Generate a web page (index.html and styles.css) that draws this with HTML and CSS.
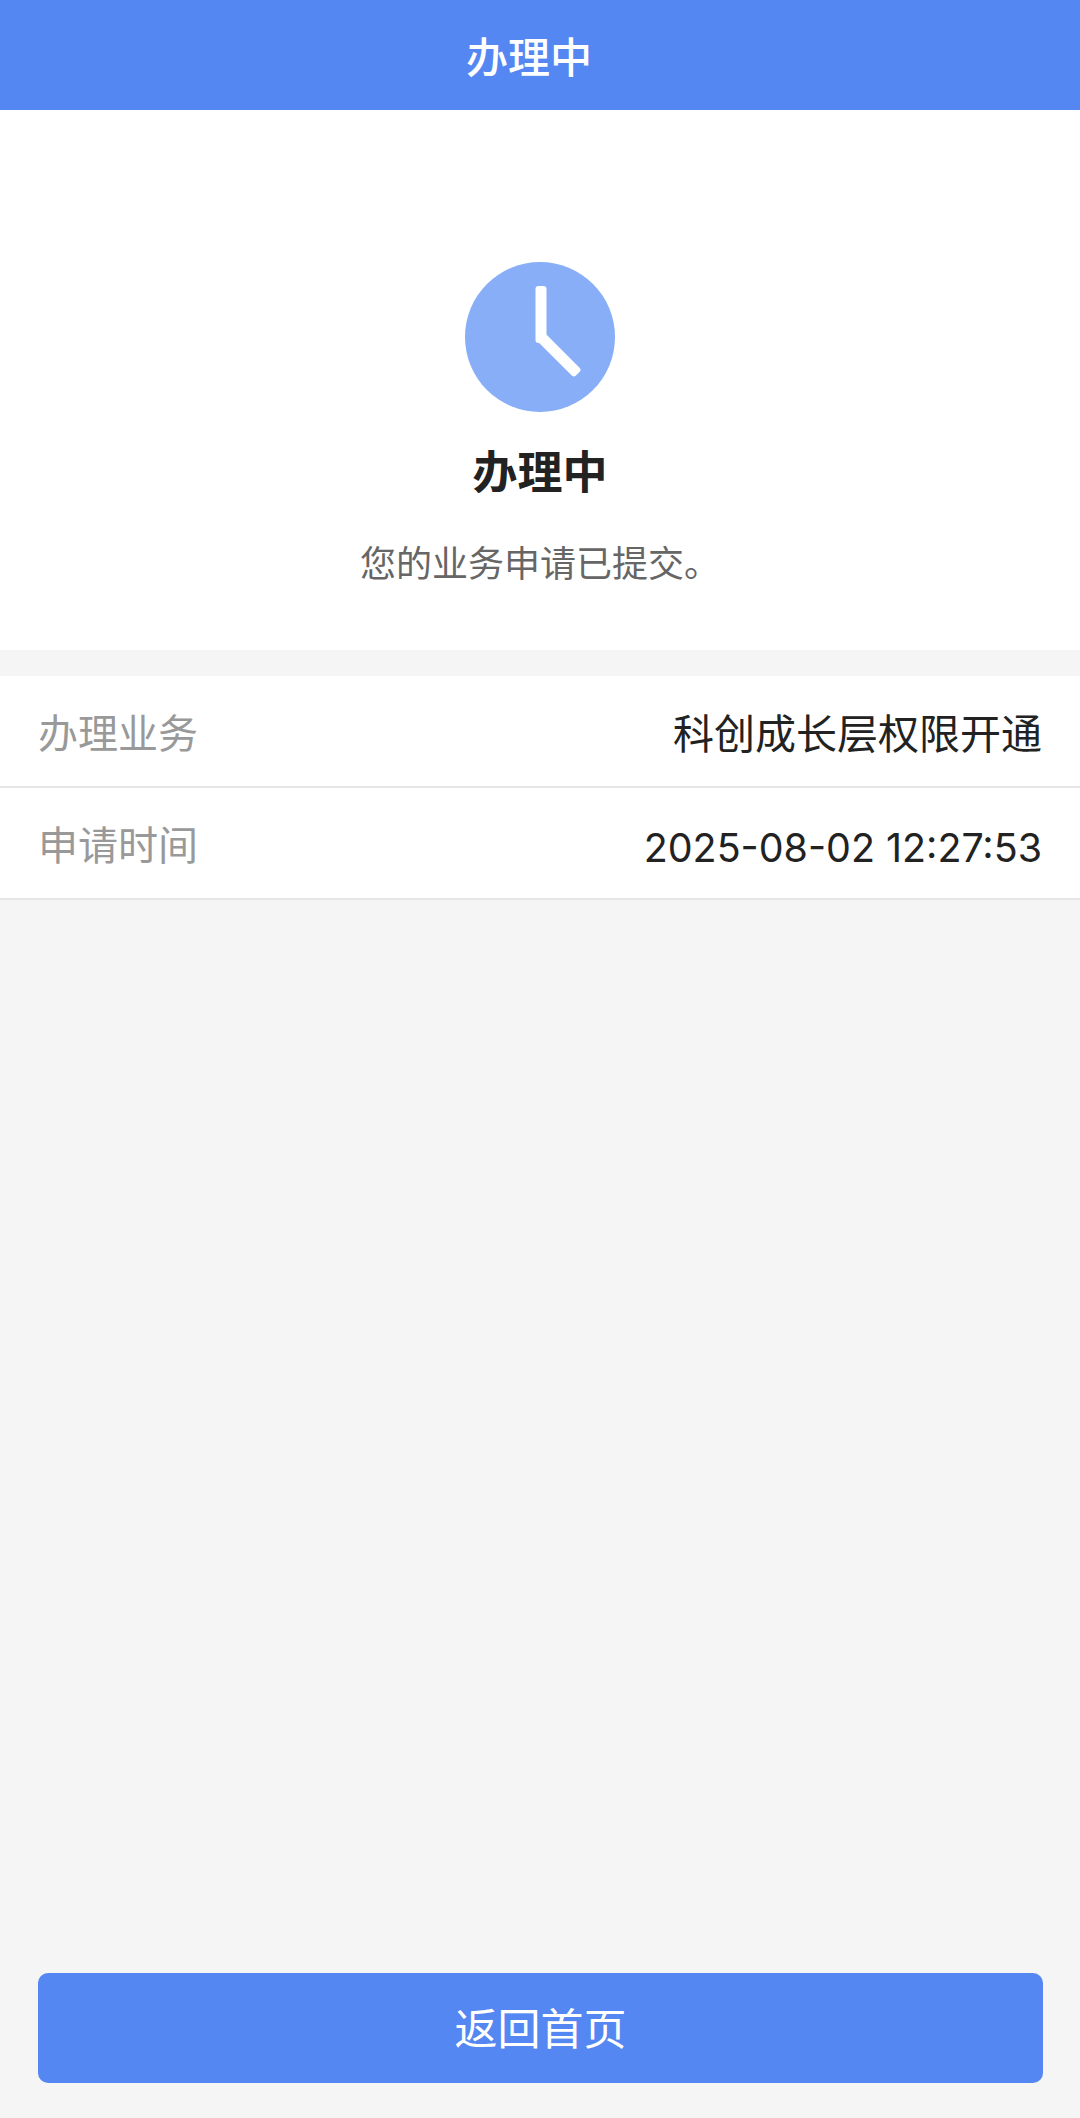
FILE: index.html
```html
<!DOCTYPE html>
<html lang="zh-CN">
<head>
<meta charset="utf-8">
<title>办理中</title>
<link rel="stylesheet" href="styles.css">
</head>
<body>
<div class="page">
  <header class="topbar"><span class="topbar-title">办理中</span></header>
  <section class="status">
    <svg class="status-icon" width="150" height="150" viewBox="0 0 150 150" aria-hidden="true">
      <circle cx="75" cy="75" r="75" fill="#88aef8"/>
      <rect x="70.5" y="24" width="11" height="57" rx="3" fill="#fff"/>
      <rect x="70.5" y="72" width="11" height="55" rx="3" fill="#fff" transform="rotate(-45 76 75)"/>
    </svg>
    <h1 class="status-title">办理中</h1>
    <p class="status-text">您的业务申请已提交。</p>
  </section>
  <section class="details">
    <div class="row"><span class="row-label">办理业务</span><span class="row-value row-value-cjk">科创成长层权限开通</span></div>
    <div class="row"><span class="row-label">申请时间</span><span class="row-value row-value-num">2025-08-02 12:27:53</span></div>
  </section>
  <footer class="actions"><button class="home-btn" type="button">返回首页</button></footer>
</div>
</body>
</html>
```
FILE: styles.css
```css
* { box-sizing: border-box; }
html, body { margin: 0; padding: 0; }
body {
  background: #f5f5f6;
  font-family: "Noto Sans CJK SC", "Liberation Sans", sans-serif;
}
.page {
  display: flex;
  flex-direction: column;
  height: 2118px;
  overflow: hidden;
}
.topbar {
  flex: none;
  height: 110px;
  background: #5587f2;
  color: #fff;
  display: flex;
  align-items: center;
  justify-content: center;
  padding: 0 22px 0 0;
}
.topbar-title { font-size: 42px; font-weight: 500; line-height: 1; }
.status {
  flex: none;
  height: 540px;
  background: #fff;
  display: flex;
  flex-direction: column;
  align-items: center;
  padding-top: 152px;
}
.status-icon { display: block; }
.status-title {
  margin: 28px 0 0;
  font-size: 45px;
  line-height: 60px;
  font-weight: 700;
  color: #222;
}
.status-text {
  margin: 38px 0 0;
  font-size: 36px;
  line-height: 46px;
  color: #666;
}
.details { margin-top: 26px; background: #fff; }
.row {
  height: 112px;
  padding: 0 38px;
  display: flex;
  align-items: center;
  justify-content: space-between;
  border-bottom: 2px solid #e6e6e6;
  font-size: 40px;
  line-height: 56px;
}
.row-label { color: #999; }
.row-value { color: #222; }
.row-value-cjk { font-size: 41px; }
.row-value-num {
  padding-top: 10px;
  font-family: Inter, "Liberation Sans", sans-serif;
  font-size: 39.4px;
}
.actions { margin-top: auto; padding: 0 37px 35px 38px; }
.home-btn {
  display: block;
  width: 100%;
  height: 110px;
  padding: 0 0 4px;
  border: 0;
  border-radius: 10px;
  background: #5587f2;
  color: #fff;
  font-family: inherit;
  font-size: 43px;
  font-weight: 400;
}
```
